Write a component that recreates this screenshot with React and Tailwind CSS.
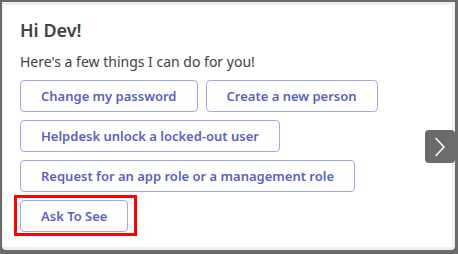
import React from "react";

const actions = [
  ["Change my password", "Create a new person"],
  ["Helpdesk unlock a locked-out user"],
  ["Request for an app role or a management role"],
];

function Btn({ children }) {
  return (
    <button className="h-[32px] px-[20px] rounded-[4px] border border-[#a3a6f2] bg-white text-[13px] font-semibold text-[#5b5fc7] leading-none whitespace-nowrap">
      {children}
    </button>
  );
}

export default function App() {
  return (
    <div
      className="w-[458px] h-[254px] bg-[#6b6b6b] pl-[2px] pt-[2px] pr-[3px] pb-[4px]"
      style={{ fontFamily: '"Noto Sans", "Open Sans", sans-serif' }}
    >
      <div className="relative h-full bg-white border-t-[3px] border-l border-r-[3px] border-b-[3px] border-[#efefef] rounded-b-[4px] pl-[17px] pt-[13px]">
        <div className="text-[18px] font-semibold text-[#424242] leading-[24px]">Hi Dev!</div>
        <div className="mt-[10px] text-[14px] text-[#424242] leading-[20px]">
          Here's a few things I can do for you!
        </div>
        <div className="mt-[8px] flex flex-col gap-[8px] items-start">
          {actions.map((row, i) => (
            <div key={i} className="flex gap-[8px]">
              {row.map((t) => (
                <Btn key={t}>{t}</Btn>
              ))}
            </div>
          ))}
          <div className="relative">
            <Btn>Ask To See</Btn>
            <div className="absolute left-[-6px] top-[-5px] w-[123px] h-[41px] border-[3px] border-[#ff0000] pointer-events-none" />
          </div>
        </div>
        <button className="absolute right-[-3px] top-[125px] w-[30px] h-[33px] rounded-[4px] bg-[#6b6b6b] flex items-center justify-center">
          <svg width="12" height="20" viewBox="0 0 12 20" fill="none">
            <path d="M2 1.5 L10 10 L2 18.5" stroke="white" strokeWidth="1.5" strokeLinecap="round" strokeLinejoin="round" />
          </svg>
        </button>
      </div>
    </div>
  );
}
